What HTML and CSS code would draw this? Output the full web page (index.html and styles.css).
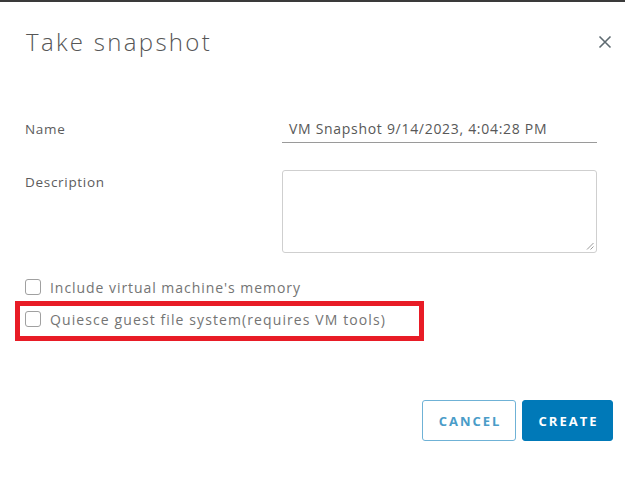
FILE: index.html
```html
<!DOCTYPE html>
<html>
<head>
<meta charset="utf-8">
<link rel="stylesheet" href="styles.css">
</head>
<body>
<div class="topbar"></div>
<div class="dialog">
  <div class="header">
    <h1 class="title">Take snapshot</h1>
    <button class="close" aria-label="Close">
      <svg width="14" height="14" viewBox="0 0 14 14"><path d="M1.5 1.5 L12.5 12.5 M12.5 1.5 L1.5 12.5" stroke="#5e6a71" stroke-width="1.6" fill="none"/></svg>
    </button>
  </div>
  <div class="form">
    <div class="row name-row">
      <label class="label">Name</label>
      <div class="input">VM Snapshot 9/14/2023, 4:04:28 PM</div>
    </div>
    <div class="row desc-row">
      <label class="label desc-label">Description</label>
      <div class="textarea">
        <svg class="grip" width="8" height="8" viewBox="0 0 8 8"><path d="M7.5 1 L1 7.5 M7.5 4.5 L4.5 7.5" stroke="#9a9a9a" stroke-width="1" fill="none"/></svg>
      </div>
    </div>
    <div class="check first">
      <span class="box"></span>
      <span class="check-text">Include virtual machine's memory</span>
    </div>
    <div class="highlight">
      <div class="check">
        <span class="box"></span>
        <span class="check-text q">Quiesce guest file system(requires VM tools)</span>
      </div>
    </div>
  </div>
  <div class="footer">
    <button class="btn btn-outline">CANCEL</button>
    <button class="btn btn-primary">CREATE</button>
  </div>
</div>
</body>
</html>
```
FILE: styles.css
```css
html, body {
  margin: 0;
  padding: 0;
  background: #ffffff;
  width: 625px;
  height: 501px;
  overflow: hidden;
  font-family: "Open Sans", "Lato", sans-serif;
  color: #575757;
}
.topbar {
  height: 2px;
  background: #3a3a3a;
}
.dialog {
  display: flex;
  flex-direction: column;
}
.header {
  display: flex;
  align-items: center;
  justify-content: space-between;
  padding: 24px 13px 0 26px;
  height: 32px;
}
.title {
  margin: 0;
  font-size: 24px;
  font-weight: 300;
  line-height: 32px;
  color: #565656;
  letter-spacing: 2.3px;
}
.close {
  border: none;
  background: none;
  padding: 0;
  width: 14px;
  height: 14px;
  display: flex;
  cursor: pointer;
}
.form {
  display: flex;
  flex-direction: column;
  padding: 0 28px 0 25px;
  margin-top: 57px;
}
.row {
  display: flex;
}
.label {
  width: 257px;
  font-size: 13.5px;
  color: #5c5c5c;
  letter-spacing: 0.7px;
}
.name-row {
  align-items: center;
  height: 28px;
}
.input {
  flex: 1;
  height: 27px;
  box-sizing: border-box;
  border-bottom: 1.5px solid #9a9a9a;
  padding-left: 7px;
  font-size: 14px;
  line-height: 26px;
  color: #585858;
  letter-spacing: 0.7px;
}
.desc-row {
  margin-top: 27px;
}
.desc-label {
  padding-top: 3px;
  line-height: 18px;
}
.textarea {
  flex: 1;
  height: 83px;
  box-sizing: border-box;
  border: 1px solid #cfcfcf;
  border-radius: 3px;
  position: relative;
}
.grip {
  position: absolute;
  right: 2px;
  bottom: 2px;
}
.check {
  display: flex;
  align-items: center;
  height: 20px;
}
.check.first {
  margin-top: 24px;
}
.box {
  width: 16px;
  height: 16px;
  border: 1px solid #a0a0a0;
  border-radius: 3px;
  box-sizing: border-box;
  margin-right: 9px;
  flex: none;
}
.check-text {
  font-size: 14px;
  color: #747474;
  letter-spacing: 0.95px;
}
.check-text.q {
  letter-spacing: 1.1px;
}
.highlight {
  margin: 4px 0 0 -10px;
  width: 409px;
  box-sizing: border-box;
  border: 5px solid #e81c26;
  padding: 3px 5px 7px 5px;
}
.footer {
  display: flex;
  justify-content: flex-end;
  gap: 6px;
  padding-right: 12px;
  margin-top: 59px;
}
.btn {
  height: 41px;
  box-sizing: border-box;
  border-radius: 3px;
  font-family: "Open Sans", "Lato", sans-serif;
  font-size: 13px;
  font-weight: 700;
  letter-spacing: 2px;
  padding: 0 0 0 2px;
  cursor: pointer;
}
.btn-outline {
  width: 94px;
  background: #ffffff;
  border: 1.5px solid #6fb2d6;
  color: #4a9cc8;
}
.btn-primary {
  width: 91px;
  background: #0079b8;
  border: 1px solid #0079b8;
  color: #ffffff;
}
```
